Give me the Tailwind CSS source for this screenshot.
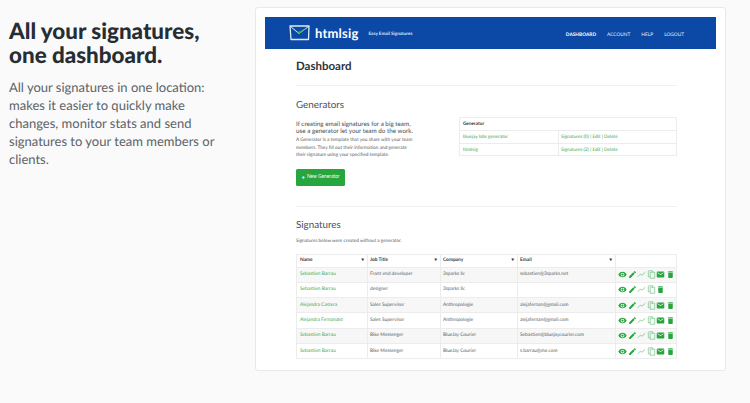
<!DOCTYPE html>
<html lang="en">
<head>
<meta charset="UTF-8">
<title>All your signatures, one dashboard</title>
<script src="https://cdn.jsdelivr.net/npm/@tailwindcss/browser@4"></script>
</head>
<body class="bg-[#fafafa] font-['Lato',sans-serif] [text-rendering:geometricPrecision] w-[750px] h-[403px] overflow-hidden">
<svg class="hidden">
  <symbol id="i-eye" viewBox="0 0 24 24"><path fill="currentColor" d="M12 4.5C7 4.5 2.7 7.6 1 12c1.700 4.400 6 7.500 11 7.500s9.300-3.100 11-7.500c-1.700-4.400-6-7.500-11-7.500zm0 12.500a5 5 0 1 1 0-10 5 5 0 0 1 0 10zm0-8a3 3 0 1 0 0 6 3 3 0 0 0 0-6z"/></symbol>
  <symbol id="i-pen" viewBox="0 0 24 24"><path fill="currentColor" d="M3 17.250V21h3.750L17.800 9.940l-3.750-3.750L3 17.250zM20.700 7.040a1 1 0 0 0 0-1.410l-2.340-2.340a1 1 0 0 0-1.410 0l-1.830 1.830 3.750 3.750 1.830-1.830z"/></symbol>
  <symbol id="i-chart" viewBox="0 0 24 24"><path fill="none" stroke="currentColor" stroke-width="2" d="M2 18l7-7 4 3 9-8"/></symbol>
  <symbol id="i-copy" viewBox="0 0 24 24"><path fill="none" stroke="currentColor" stroke-width="1.800" d="M15 6V2H5a1.500 1.500 0 0 0-1.500 1.500V18H8M8.500 6H20.500V22H8.500z"/></symbol>
  <symbol id="i-mail" viewBox="0 0 24 24"><path fill="currentColor" d="M20 4H4a2 2 0 0 0-2 2v12a2 2 0 0 0 2 2h16a2 2 0 0 0 2-2V6a2 2 0 0 0-2-2zm0 4-8 5-8-5V6l8 5 8-5v2z"/></symbol>
  <symbol id="i-trash" viewBox="0 0 24 24"><path fill="currentColor" d="M6 19a2 2 0 0 0 2 2h8a2 2 0 0 0 2-2V7H6v12zM19 4h-3.500l-1-1h-5l-1 1H5v2h14V4z"/></symbol>
</svg>
<div class="flex items-start">
  <!-- Left copy -->
  <div class="w-[255px] pl-[9px] pt-[19px] shrink-0">
    <h1 class="text-[22.400px] leading-[23.500px] font-black text-[#262d33]">All your signatures,<br>one dashboard.</h1>
    <p class="mt-[12px] text-[13px] leading-[18px] text-[#5c6369] w-[225px]">All your signatures in one location: makes it easier to quickly make changes, monitor stats and send signatures to your team members or clients.</p>
  </div>

  <!-- Screenshot card -->
  <div class="mt-[7px] w-[471px] h-[364px] bg-white border border-[#e9e9e9] rounded-[3px] pt-[9px] px-[9px]">
    <header class="h-[32px] bg-[#0c48a6] flex items-center text-white">
      <svg class="ml-[23px] w-[23px] h-[16px]" viewBox="0 0 22 16" fill="none">
        <path d="M1.500 1h19l-.500 13.500H2.500z" stroke="#dfeaf5" stroke-width="1.300" stroke-linejoin="round"/>
        <path d="M2 1.500l8.500 7 9.500-7" stroke="#dfeaf5" stroke-width="1"/>
        <path d="M8.500 7l2.500 2 7-6-7 3.500z" fill="#3fb356"/>
      </svg>
      <span class="ml-[4px] text-[13px] font-bold tracking-[0.2px] leading-none">htmlsig</span>
      <span class="ml-[10px] text-[4.600px] font-bold text-[#dce6f4]">Easy Email Signatures</span>
      <nav class="ml-auto mr-[32px] flex gap-[11px] text-[4.800px] leading-none pt-[4px] text-[#e6edf7]">
        <span class="font-bold text-white">DASHBOARD</span><span>ACCOUNT</span><span>HELP</span><span>LOGOUT</span>
      </nav>
    </header>

    <main class="mx-[31px] w-[381px]">
      <h2 class="pt-[11px] text-[11.500px] leading-[14px] font-bold text-[#2e3338]">Dashboard</h2>
      <div class="mt-[11px] border-t border-[#f1f1f1]"></div>

      <h3 class="mt-[13px] text-[9.800px] leading-[12px] text-[#4a4f54]">Generators</h3>
      <div class="flex items-start">
        <div class="w-[163px] shrink-0">
          <p class="mt-[10px] text-[6.300px] leading-[7px] text-[#44494e]">If creating email signatures for a big team,<br>use a generator let your team do the work.</p>
          <p class="mt-[2px] text-[4.750px] leading-[7.500px] text-[#555a5f]">A Generator is a template that you share with your team<br>members. They fill out their information and generate<br>their signature using your specified template.</p>
          <button class="mt-[9px] w-[49px] h-[17px] bg-[#27a53f] rounded-[1.500px] text-white text-[4.800px] flex items-center justify-center gap-[2px]"><span class="font-black text-[6px] leading-none">+</span>New Generator</button>
        </div>
        <table class="mt-[6px] w-[218px] table-fixed border-collapse border border-[#ececec] text-[4.700px]">
          <colgroup><col class="w-[99px]"><col></colgroup>
          <tbody>
            <tr class="h-[13px]"><td class="pl-[3px] font-bold text-[#33383d]" colspan="2">Generator</td></tr>
            <tr class="h-[13px] border-t border-[#ececec] text-[#37a84c]"><td class="pl-[3px]">bluejay labs generator</td><td class="pl-[2px] border-l border-[#ececec]">Signatures (0) | Edit | Delete</td></tr>
            <tr class="h-[12px] border-t border-[#ececec] text-[#37a84c]"><td class="pl-[3px]">htmlsig</td><td class="pl-[2px] border-l border-[#ececec]">Signatures (2) | Edit | Delete</td></tr>
          </tbody>
        </table>
      </div>

      <div class="mt-[20px] border-t border-[#f1f1f1]"></div>
      <h3 class="mt-[12px] text-[9.800px] leading-[12px] text-[#4a4f54]">Signatures</h3>
      <p class="mt-[6px] text-[4.700px] leading-[7px] text-[#555a5f]">Signatures below were created without a generator.</p>

      <table class="mt-[10px] w-[381px] table-fixed border-collapse border border-[#ececec] text-[4.800px] text-[#565b60]">
        <colgroup><col class="w-[71px]"><col class="w-[73px]"><col class="w-[77px]"><col class="w-[98px]"><col></colgroup>
        <thead>
          <tr class="h-[13px] text-[#33383d] font-bold">
            <th class="pl-[3px] text-left font-bold"><div class="flex justify-between pr-[3px]">Name<span>▾</span></div></th>
            <th class="pl-[2px] text-left font-bold border-l border-[#ececec]"><div class="flex justify-between pr-[3px]">Job Title<span>▾</span></div></th>
            <th class="pl-[2px] text-left font-bold border-l border-[#ececec]"><div class="flex justify-between pr-[3px]">Company<span>▾</span></div></th>
            <th class="pl-[2px] text-left font-bold border-l border-[#ececec]"><div class="flex justify-between pr-[3px]">Email<span>▾</span></div></th>
            <th class="border-l border-[#ececec]"></th>
          </tr>
        </thead>
        <tbody id="rows"></tbody>
      </table>
    </main>
  </div>
</div>
<script>
const people = [
  ['Sebastien Barrau', 'Front end developer', '3sparks llc', 'sebastien@3sparks.net', true],
  ['Sebastien Barrau', 'designer', '3sparks llc', '', false],
  ['Alejandra Castera', 'Sales Supervisor', 'Anthropologie', 'alejafernan@gmail.com', true],
  ['Alejandra Fernandez', 'Sales Supervisor', 'Anthropologie', 'alejafernan@gmail.com', true],
  ['Sebastien Barrau', 'Bike Messenger', 'BlueJay Courier', 'Sebastien@bluejaycourier.com', true],
  ['Sebastien Barrau', 'Bike Messenger', 'BlueJay Courier', 's.barrau@me.com', true],
];
const icon = (name, cls) => `<svg class="${cls}"><use href="#i-${name}"></use></svg>`;
document.getElementById('rows').innerHTML = people.map((p, i) => `
  <tr class="h-[15.300px] border-t border-[#ececec] ${i % 2 === 0 ? 'bg-[#f7f7f7]' : 'bg-white'}">
    <td class="pl-[3px] text-[#37a84c]">${p[0]}</td>
    <td class="pl-[2px] border-l border-[#ececec]">${p[1]}</td>
    <td class="pl-[2px] border-l border-[#ececec]">${p[2]}</td>
    <td class="pl-[2px] border-l border-[#ececec]">${p[3]}</td>
    <td class="pl-[2px] border-l border-[#ececec]">
      <div class="flex items-center gap-[0.500px] text-[#27a53f]">
        ${icon('eye', 'w-[9px] h-[9px]')}${icon('pen', 'w-[9px] h-[9px]')}${icon('chart', 'w-[9px] h-[9px] text-[#6cc07e]')}${icon('copy', 'w-[9px] h-[11px] text-[#6cc07e]')}
        ${p[4] ? icon('mail', 'w-[9px] h-[9px]') : ''}${icon('trash', 'w-[9px] h-[9px]')}
      </div>
    </td>
  </tr>`).join('');
</script>
</body>
</html>
